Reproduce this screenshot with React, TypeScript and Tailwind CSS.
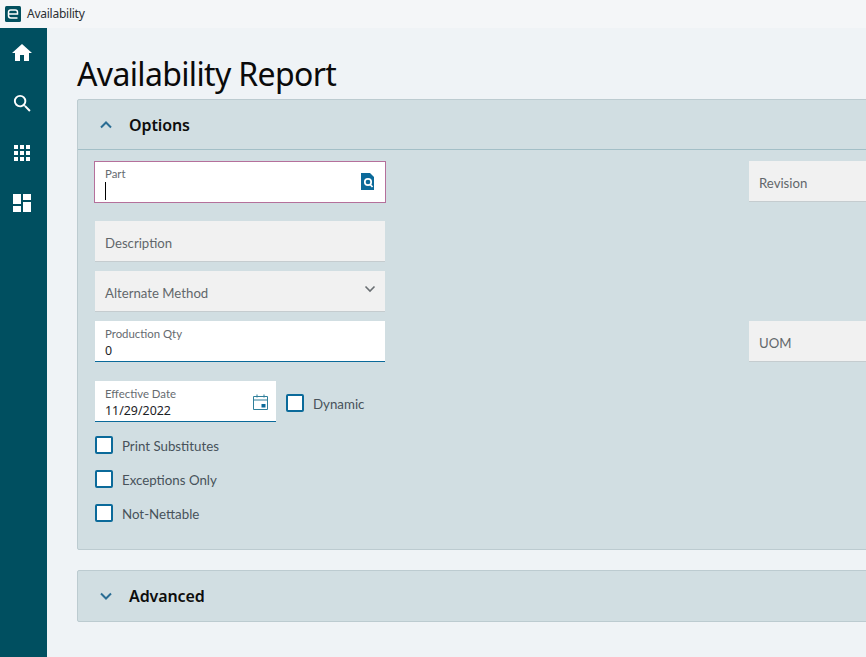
import React from "react";

function Check({ label }: { label: string }) {
  return (
    <div className="flex items-center gap-[9px] h-[18px]">
      <span className="w-[18px] h-[18px] rounded-[2px] border-2 border-[#0b6a9a] bg-white shrink-0" />
      <span className="text-[13.3px] leading-[18px] mt-[2px] text-[#47525a] font-['Lato',sans-serif]">{label}</span>
    </div>
  );
}

function ReadOnly({ label, className = "", children }: { label: string; className?: string; children?: React.ReactNode }) {
  return (
    <div className={`h-[41px] bg-[#f1f1f1] border-b border-[#c5cccf] pl-[10px] pr-[9px] flex items-center justify-between ${className}`}>
      <span className="text-[13.2px] leading-[20px] mt-[4px] text-[#62676b] font-['Lato',sans-serif]">{label}</span>
      {children}
    </div>
  );
}

export default function App() {
  return (
    <div className="h-[657px] w-[866px] overflow-hidden flex flex-col bg-[#eff3f6] font-['Noto_Sans',sans-serif]">
      <div className="h-[28px] shrink-0 bg-[#f4f6f8] flex items-center pl-[5px] gap-[6px]">
        <svg width="16" height="16" viewBox="0 0 16 16">
          <rect width="16" height="16" rx="1.5" fill="#02505f" />
          <path d="M3.5 8h9V6.2Q12.5 4 10.2 4H5.8Q3.5 4 3.5 6.2v3.6Q3.5 12 5.8 12H12.5" fill="none" stroke="#fff" strokeWidth="1.5" />
        </svg>
        <span className="text-[12px] leading-[16px] tracking-[-0.25px] text-[#2b2f33]">Availability</span>
      </div>
      <div className="flex-1 flex min-h-0">
        <nav className="w-[47px] shrink-0 bg-[#004f60] flex flex-col items-center pt-[14px] pr-[3px] gap-[26px]">
          <svg width="24" height="22" viewBox="0 1 24 22" fill="#fff"><path d="M10 20v-6h4v6h5v-8h3L12 3 2 12h3v8z" /></svg>
          <svg className="mt-[2px]" width="23" height="23" viewBox="0 0 24 24" fill="#fff"><path d="M15.5 14h-.79l-.28-.27A6.47 6.47 0 0 0 16 9.5 6.5 6.5 0 1 0 9.5 16c1.61 0 3.09-.59 4.23-1.57l.27.28v.79l5 4.99L20.49 19l-4.99-5zm-6 0C7.01 14 5 11.99 5 9.5S7.01 5 9.5 5 14 7.01 14 9.5 11.99 14 9.5 14z" /></svg>
          <svg width="24" height="24" viewBox="0 0 24 24" fill="#fff"><path d="M4 8h4V4H4v4zm6 12h4v-4h-4v4zm-6 0h4v-4H4v4zm0-6h4v-4H4v4zm6 0h4v-4h-4v4zm6-10v4h4V4h-4zm-6 4h4V4h-4v4zm6 6h4v-4h-4v4zm0 6h4v-4h-4v4z" /></svg>
          <svg width="24" height="24" viewBox="0 0 24 24" fill="#fff"><path d="M3 13h8V3H3v10zm0 8h8v-6H3v6zm10 0h8V11h-8v10zm0-18v6h8V3h-8z" /></svg>
        </nav>
        <main className="flex-1 min-w-0 pl-[30px] overflow-hidden">
          <h1 className="text-[32px] leading-[44px] mt-[24px] mb-[3px] tracking-[-0.65px] text-[#0a0a0a] font-normal">Availability Report</h1>
          <section className="w-[820px] h-[451px] bg-[#d1dee2] border border-[#bccbd0] rounded-[2px]">
            <header className="h-[50px] border-b border-[#a3bfc7] flex items-center pl-[21px] gap-[16px]">
              <svg width="14" height="10" viewBox="0 0 14 10" fill="none"><path d="M2 7.5 7 2.5l5 5" stroke="#2a6d94" strokeWidth="2" /></svg>
              <span className="text-[16px] font-semibold tracking-[-0.1px] text-[#0d0d0d]">Options</span>
            </header>
            <div className="flex pt-[11px] pl-[16px]">
              <div className="w-[292px] shrink-0 flex flex-col">
                <div className="relative h-[42px] bg-white border border-[#b5709b] pl-[10px] pt-[4px]">
                  <div className="text-[11.4px] leading-[16px] text-[#666b70] font-['Lato',sans-serif]">Part</div>
                  <div className="w-px h-[18px] bg-black" />
                  <svg className="absolute right-[11px] top-[11px]" width="13" height="17" viewBox="0 0 13 17">
                    <path d="M0 0h9l4 4v13H0z" fill="#0b6a9a" />
                    <circle cx="7" cy="9" r="3.2" fill="none" stroke="#fff" strokeWidth="1.7" />
                    <path d="M9 11.2 11.5 14" stroke="#fff" strokeWidth="1.7" />
                  </svg>
                </div>
                <ReadOnly label="Description" className="mt-[18px] w-[290px] ml-px" />
                <ReadOnly label="Alternate Method" className="mt-[9px] w-[290px] ml-px">
                  <svg className="mb-[5px]" width="12" height="8" viewBox="0 0 12 8" fill="none"><path d="M1.5 1.5 6 6l4.5-4.5" stroke="#6a6f73" strokeWidth="1.6" /></svg>
                </ReadOnly>
                <div className="mt-[9px] ml-px w-[290px] h-[41px] bg-white border-b border-[#0b6a9a] pl-[10px] pt-[5px]">
                  <div className="text-[11.4px] leading-[16px] text-[#666b70] font-['Lato',sans-serif]">Production Qty</div>
                  <div className="text-[12.4px] leading-[17px] text-[#1c2226]">0</div>
                </div>
                <div className="mt-[19px] ml-px flex items-start gap-[10px]">
                  <div className="relative w-[181px] h-[41px] shrink-0 bg-white border-b border-[#0b6a9a] pl-[10px] pt-[5px]">
                    <div className="text-[11.4px] leading-[16px] text-[#666b70] font-['Lato',sans-serif]">Effective Date</div>
                    <div className="text-[12.4px] leading-[17px] text-[#1c2226]">11/29/2022</div>
                    <svg className="absolute right-[8px] top-[13px]" width="15" height="16" viewBox="0 0 15 16" fill="none">
                      <path d="M.5 2.5h14v13H.5zM.5 6h14M4 .5v3M11 .5v3" stroke="#2f7f9a" />
                      <rect x="8.5" y="10" width="4" height="3.5" fill="#0b6a9a" />
                    </svg>
                  </div>
                  <div className="mt-[13px]">
                    <Check label="Dynamic" />
                  </div>
                </div>
                <div className="flex flex-col gap-[16px] mt-[14px] ml-px">
                  <Check label="Print Substitutes" />
                  <Check label="Exceptions Only" />
                  <Check label="Not-Nettable" />
                </div>
              </div>
              <div className="ml-[363px] w-[150px] shrink-0 flex flex-col">
                <ReadOnly label="Revision" />
                <ReadOnly label="UOM" className="mt-[119px]" />
              </div>
            </div>
          </section>
          <section className="mt-[20px] w-[820px] h-[52px] bg-[#d1dee2] border border-[#bccbd0] rounded-[2px] flex items-center pl-[21px] gap-[16px]">
            <svg width="14" height="10" viewBox="0 0 14 10" fill="none"><path d="M2 2.5 7 7.5l5-5" stroke="#2a6d94" strokeWidth="2" /></svg>
            <span className="text-[16px] font-semibold tracking-[-0.1px] text-[#0d0d0d]">Advanced</span>
          </section>
        </main>
      </div>
    </div>
  );
}
